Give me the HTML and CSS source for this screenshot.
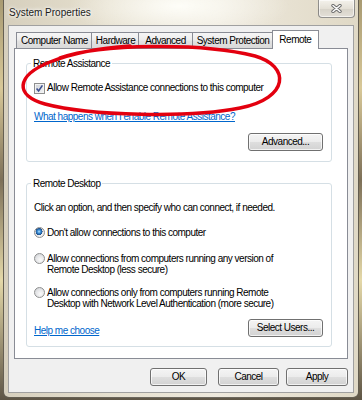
FILE: index.html
```html
<!DOCTYPE html>
<html>
<head>
<meta charset="utf-8">
<title>System Properties</title>
<link rel="stylesheet" href="styles.css">
</head>
<body>
<div class="window">
  <div class="titlebar">
    <span class="title">System Properties</span>
    <div class="close">
      <svg width="11" height="9" viewBox="0 0 11 9">
        <path d="M2 1.5 L9 7.5 M9 1.5 L2 7.5" stroke="#6b6b6b" stroke-width="3.4" stroke-linecap="round" fill="none"/>
        <path d="M2 1.5 L9 7.5 M9 1.5 L2 7.5" stroke="#fbfbfb" stroke-width="1.6" stroke-linecap="round" fill="none"/>
      </svg>
    </div>
  </div>
  <div class="client">
    <div class="tabs">
      <div class="tab">Computer Name</div>
      <div class="tab">Hardware</div>
      <div class="tab tab-wide">Advanced</div>
      <div class="tab">System Protection</div>
      <div class="tab selected">Remote</div>
    </div>
    <div class="panel">
      <div class="group group-ra">
        <div class="legend">Remote Assistance</div>
        <div class="check-row">
          <span class="checkbox">
            <svg width="9" height="9" viewBox="0 0 9 9"><path d="M1.6 4.6 L3.6 7 L7.4 1.4" stroke="#3a4f8f" stroke-width="1.6" fill="none"/></svg>
          </span>
          <span>Allow Remote Assistance connections to this computer</span>
        </div>
        <a class="link link-ra">What happens when I enable Remote Assistance?</a>
        <div class="btn-row"><button class="btn">Advanced...</button></div>
      </div>
      <div class="group group-rd">
        <div class="legend">Remote Desktop</div>
        <p class="desc">Click an option, and then specify who can connect, if needed.</p>
        <div class="radio-row r1"><span class="radio on"></span><span>Don't allow connections to this computer</span></div>
        <div class="radio-row r2"><span class="radio"></span><span>Allow connections from computers running any version of<br>Remote Desktop (less secure)</span></div>
        <div class="radio-row r3"><span class="radio"></span><span>Allow connections only from computers running Remote<br>Desktop with Network Level Authentication (more secure)</span></div>
        <div class="bottom-row">
          <a class="link link-help">Help me choose</a>
          <button class="btn">Select Users...</button>
        </div>
      </div>
    </div>
    <div class="dialog-buttons">
      <button class="btn btn-ok">OK</button>
      <button class="btn btn-cancel">Cancel</button>
      <button class="btn btn-apply">Apply</button>
    </div>
  </div>
</div>
<svg class="annotation" width="362" height="400" viewBox="0 0 362 400">
  <path d="M60 58 C100 44 200 42 255 56 C290 66 290 98 240 108 C190 118 90 116 45 104 C15 96 15 76 50 62 C70 54 100 48 130 46" fill="none" stroke="#e3000f" stroke-width="3.5" stroke-linecap="round"/>
</svg>
</body>
</html>
```

FILE: styles.css
```css
* { box-sizing: border-box; }
html, body { margin: 0; padding: 0; }
body {
  width: 362px;
  height: 400px;
  overflow: hidden;
  position: relative;
  font-family: "Liberation Sans", Arial, sans-serif;
  font-size: 10px;
  letter-spacing: -0.5px;
  color: #000;
  background: linear-gradient(180deg, #a89a72 0%, #d8c898 22%, #7d7058 45%, #e4d8a8 70%, #5e5545 100%);
}
.window {
  margin-left: 3px;
  width: 356px;
  height: 398px;
  border: 1px solid rgba(50, 45, 35, 0.7);
  border-top: 0;
  border-radius: 0 0 6px 6px;
  padding: 0 4px 4px;
  display: flex;
  flex-direction: column;
  background:
    radial-gradient(ellipse 110px 34px at 175px 6px, rgba(255, 255, 250, 0.95), rgba(255, 255, 250, 0) 100%),
    linear-gradient(90deg, #d6cfbd 0%, #e6e0cf 30%, #eee9dd 60%, #e0d9c6 100%);
}
.titlebar {
  height: 25px;
  flex: none;
  display: flex;
  justify-content: space-between;
  align-items: flex-start;
}
.title {
  margin: 7px 0 0 1px;
  line-height: 12px;
  letter-spacing: 0;
  color: #1b1b1b;
  text-shadow: 0 0 5px #fff, 0 0 3px #fff;
}
.close {
  width: 37px;
  height: 18px;
  margin-right: -1px;
  border: 1px solid rgba(95, 95, 95, 0.65);
  border-top: 0;
  border-radius: 0 0 4px 4px;
  background: linear-gradient(#f4f2ec, #e4e0d6 50%, #d6d2c8 51%, #e4e0d8);
  box-shadow: inset 0 0 0 1px rgba(255, 255, 255, 0.6);
  display: flex;
  align-items: center;
  justify-content: center;
}
.close svg { display: block; }
.client {
  flex: 1;
  background: #f0f0f0;
  border: 1px solid #a0a0a0;
  padding: 4px 5px 6px;
  display: flex;
  flex-direction: column;
}
.tabs {
  height: 18px;
  flex: none;
  display: flex;
  align-items: flex-end;
  padding-left: 2px;
}
.tab {
  height: 16px;
  line-height: 15px;
  padding: 0 3px 0 4px;
  border: 1px solid #898c95;
  border-bottom: 0;
  margin-right: -1px;
  white-space: nowrap;
  background: linear-gradient(#f6f6f6, #ededed 45%, #e2e2e2 55%, #d9d9d9);
}
.tab.tab-wide { padding: 0 6px; }
.tab.selected {
  position: relative;
  z-index: 1;
  height: 19px;
  line-height: 17px;
  padding: 0 7px 0 6px;
  margin-bottom: -1px;
  background: #fff;
}
.panel {
  height: 311px;
  flex: none;
  background: #fff;
  border: 1px solid #898c95;
  padding: 14px 15px 0 11px;
}
.group {
  border: 1px solid #d5dfe5;
  border-radius: 3px;
  padding: 0 8px 0 7px;
}
.group-ra { padding-bottom: 10px; }
.group-rd { margin-top: 21px; padding-bottom: 9px; }
.legend {
  width: fit-content;
  height: 12px;
  line-height: 12px;
  margin: -6px 0 0 -3px;
  padding: 0 2px;
  background: #fff;
}
.check-row {
  display: flex;
  align-items: center;
  height: 12px;
  margin-top: 12px;
  line-height: 12px;
}
.checkbox {
  width: 11px;
  height: 11px;
  margin-right: 2px;
  flex: none;
  border: 1px solid #8e8f8f;
  background: linear-gradient(135deg, #cdd1d7, #f4f5f6);
  box-shadow: inset 0 0 0 1px #f2f2f2;
  display: flex;
  align-items: center;
  justify-content: center;
}
.checkbox svg { display: block; }
.link {
  display: block;
  width: fit-content;
  line-height: 12px;
  color: #0066cc;
  text-decoration: underline;
}
.link-ra { margin-top: 17px; }
.btn-row {
  display: flex;
  justify-content: flex-end;
  margin-top: 10px;
}
.btn {
  width: 75px;
  height: 18px;
  padding: 0;
  font: inherit;
  letter-spacing: inherit;
  line-height: 16px;
  color: #000;
  text-align: center;
  border: 1px solid #707070;
  border-radius: 3px;
  background: linear-gradient(#f4f4f4 0%, #ececec 48%, #dedede 52%, #d2d2d2 100%);
  box-shadow: inset 0 0 0 1px rgba(255, 255, 255, 0.7);
}
.desc {
  margin: 12px 0 0;
  line-height: 12px;
}
.radio-row {
  display: flex;
  align-items: flex-start;
  line-height: 11px;
}
.radio-row.r1 { margin-top: 13px; line-height: 12px; }
.radio-row.r2 { margin-top: 14px; }
.radio-row.r3 { margin-top: 12px; }
.radio {
  width: 11px;
  height: 11px;
  margin-right: 2px;
  flex: none;
  border-radius: 50%;
  border: 1px solid #8e8f8f;
  background: radial-gradient(circle at 60% 65%, #fbfbfb 0, #e3e4e6 55%, #c9ccd1 100%);
}
.radio.on {
  background:
    radial-gradient(circle at 45% 40%, #b8e4ff 0, #3d8fd6 1.6px, #1c5a9c 3px, #2a4e80 3.4px, rgba(0,0,0,0) 3.6px),
    radial-gradient(circle at 60% 65%, #fbfbfb 0, #e3e4e6 55%, #c9ccd1 100%);
}
.bottom-row {
  display: flex;
  justify-content: space-between;
  align-items: center;
  margin-top: 10px;
}
.link-help { margin-top: 5px; }
.dialog-buttons {
  display: flex;
  justify-content: flex-end;
  margin-top: 9px;
}
.btn-ok { width: 57px; margin-right: 11px; }
.btn-cancel { width: 61px; margin-right: 7px; }
.btn-apply { width: 62px; }
.annotation {
  position: absolute;
  left: 0;
  top: 0;
  pointer-events: none;
}
```
